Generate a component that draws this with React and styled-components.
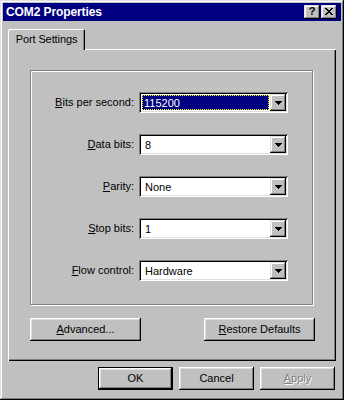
import React from 'react';
import styled, { createGlobalStyle } from 'styled-components';

const Global = createGlobalStyle`
  html, body { margin: 0; padding: 0; background: #c0c0c0; }
  body {
    font-family: "Liberation Sans", Arial, sans-serif;
    font-size: 11px;
    color: #000;
  }
  * { box-sizing: border-box; }
`;

const Window = styled.div`
  width: 344px;
  height: 400px;
  background: #c0c0c0;
  padding: 3px;
  display: flex;
  flex-direction: column;
  box-shadow: inset -1px -1px 0 #000, inset 1px 1px 0 #dfdfdf,
    inset -2px -2px 0 #808080, inset 2px 2px 0 #fff;
`;

const TitleBar = styled.div`
  height: 18px;
  background: #000080;
  display: flex;
  align-items: center;
  padding: 0 4px 0 2px;
`;

const Title = styled.div`
  flex: 1;
  color: #fff;
  font-weight: bold;
  font-size: 12px;
  letter-spacing: -0.1px;
  padding-left: 1px;
`;

const CaptionButton = styled.div`
  width: 16px;
  height: 14px;
  margin-left: ${(p) => (p.$gap ? '1px' : '0')};
  background: #c0c0c0;
  display: flex;
  align-items: center;
  justify-content: center;
  font-weight: bold;
  font-size: 11px;
  line-height: 1;
  padding-bottom: 1px;
  box-shadow: inset -1px -1px 0 #000, inset 1px 1px 0 #dfdfdf,
    inset -2px -2px 0 #808080, inset 2px 2px 0 #fff;
`;

const Body = styled.div`
  flex: 1;
  display: flex;
  flex-direction: column;
  padding: 8px 5px 0 5px;
`;

const TabStrip = styled.div`
  display: flex;
  height: 20px;
`;

const Tab = styled.div`
  position: relative;
  z-index: 1;
  width: 77px;
  height: 21px;
  margin-bottom: -1px;
  background: #c0c0c0;
  border-radius: 2px 2px 0 0;
  display: flex;
  align-items: center;
  justify-content: center;
  padding-bottom: 2px;
  letter-spacing: -0.1px;
  box-shadow: inset 1px 1px 0 #fff, inset -1px 0 0 #000, inset -2px 0 0 #808080;
`;

const Panel = styled.div`
  height: 312px;
  display: flex;
  flex-direction: column;
  padding: 21px 21px 0 22px;
  box-shadow: inset 1px 1px 0 #fff, inset -1px -1px 0 #000,
    inset -2px -2px 0 #808080;
`;

const GroupBox = styled.div`
  width: 283px;
  height: 235px;
  border: 1px solid #808080;
  box-shadow: inset 1px 1px 0 #fff, 1px 1px 0 #fff;
  display: grid;
  grid-template-columns: 103px 149px;
  grid-auto-rows: 21px;
  column-gap: 5px;
  row-gap: 21px;
  padding-top: 21px;
  align-content: start;
`;

const Label = styled.label`
  display: flex;
  align-items: center;
  justify-content: flex-end;
  white-space: nowrap;
  padding-bottom: 1px;
`;

const Combo = styled.div`
  width: 149px;
  height: 21px;
  background: #fff;
  padding: 2px;
  display: flex;
  box-shadow: inset 1px 1px 0 #808080, inset -1px -1px 0 #fff,
    inset 2px 2px 0 #000, inset -2px -2px 0 #dfdfdf;
`;

const ComboValue = styled.div`
  flex: 1;
  padding: 1px;
  display: flex;
`;

const ValueText = styled.div`
  flex: 1;
  display: flex;
  align-items: center;
  padding-left: ${(p) => (p.$selected ? '1px' : '2px')};
  background: ${(p) => (p.$selected ? '#000080' : 'transparent')};
  color: ${(p) => (p.$selected ? '#fff' : '#000')};
  border: 1px ${(p) => (p.$selected ? 'dotted #ffff00' : 'solid transparent')};
`;

const DropButton = styled.div`
  width: 16px;
  height: 17px;
  background: #c0c0c0;
  display: flex;
  align-items: center;
  justify-content: center;
  box-shadow: inset -1px -1px 0 #000, inset 1px 1px 0 #dfdfdf,
    inset -2px -2px 0 #808080, inset 2px 2px 0 #fff;
`;

const PanelButtons = styled.div`
  margin-top: 13px;
  display: flex;
  justify-content: space-between;
`;

const PushButton = styled.div`
  width: ${(p) => p.$w}px;
  height: 23px;
  background: #c0c0c0;
  display: flex;
  align-items: center;
  justify-content: center;
  padding-bottom: 1px;
  color: ${(p) => (p.$disabled ? '#808080' : '#000')};
  text-shadow: ${(p) => (p.$disabled ? '1px 1px 0 #fff' : 'none')};
  border: ${(p) => (p.$default ? '1px solid #000' : '0')};
  box-shadow: inset -1px -1px 0 #000, inset 1px 1px 0 #fff,
    inset -2px -2px 0 #808080, inset 2px 2px 0 #dfdfdf;
`;

const DialogButtons = styled.div`
  margin-top: 6px;
  display: flex;
  justify-content: flex-end;
  gap: 6px;
  padding-right: 1px;
`;

const CloseGlyph = () => (
  <svg width="8" height="7" viewBox="0 0 8 7" shapeRendering="crispEdges">
    <path
      fill="#000"
      d="M0 0h2v1h-2zM6 0h2v1h-2zM1 1h2v1h-2zM5 1h2v1h-2zM2 2h4v1h-4zM3 3h2v1h-2zM2 4h4v1h-4zM1 5h2v1h-2zM5 5h2v1h-2zM0 6h2v1h-2zM6 6h2v1h-2z"
    />
  </svg>
);

const Arrow = () => (
  <svg width="7" height="4" viewBox="0 0 7 4" shapeRendering="crispEdges">
    <path fill="#000" d="M0 0h7v1h-7zM1 1h5v1h-5zM2 2h3v1h-3zM3 3h1v1h-1z" />
  </svg>
);

const rows = [
  { key: 'B', post: 'its per second:', value: '115200', selected: true },
  { key: 'D', post: 'ata bits:', value: '8' },
  { key: 'P', post: 'arity:', value: 'None' },
  { key: 'S', post: 'top bits:', value: '1' },
  { key: 'F', post: 'low control:', value: 'Hardware' },
];

export default function App() {
  return (
    <>
      <Global />
      <Window>
        <TitleBar>
          <Title>COM2 Properties</Title>
          <CaptionButton>?</CaptionButton>
          <CaptionButton $gap>
            <CloseGlyph />
          </CaptionButton>
        </TitleBar>
        <Body>
          <TabStrip>
            <Tab>Port Settings</Tab>
          </TabStrip>
          <Panel>
            <GroupBox>
              {rows.map((r) => (
                <React.Fragment key={r.key}>
                  <Label>
                    <u>{r.key}</u>
                    {r.post}
                  </Label>
                  <Combo>
                    <ComboValue>
                      <ValueText $selected={r.selected}>{r.value}</ValueText>
                    </ComboValue>
                    <DropButton>
                      <Arrow />
                    </DropButton>
                  </Combo>
                </React.Fragment>
              ))}
            </GroupBox>
            <PanelButtons>
              <PushButton $w={111}>
                <span>
                  <u>A</u>dvanced...
                </span>
              </PushButton>
              <PushButton $w={111}>
                <span>
                  <u>R</u>estore Defaults
                </span>
              </PushButton>
            </PanelButtons>
          </Panel>
          <DialogButtons>
            <PushButton $w={75} $default>
              OK
            </PushButton>
            <PushButton $w={75}>Cancel</PushButton>
            <PushButton $w={75} $disabled>
              <span>
                <u>A</u>pply
              </span>
            </PushButton>
          </DialogButtons>
        </Body>
      </Window>
    </>
  );
}
